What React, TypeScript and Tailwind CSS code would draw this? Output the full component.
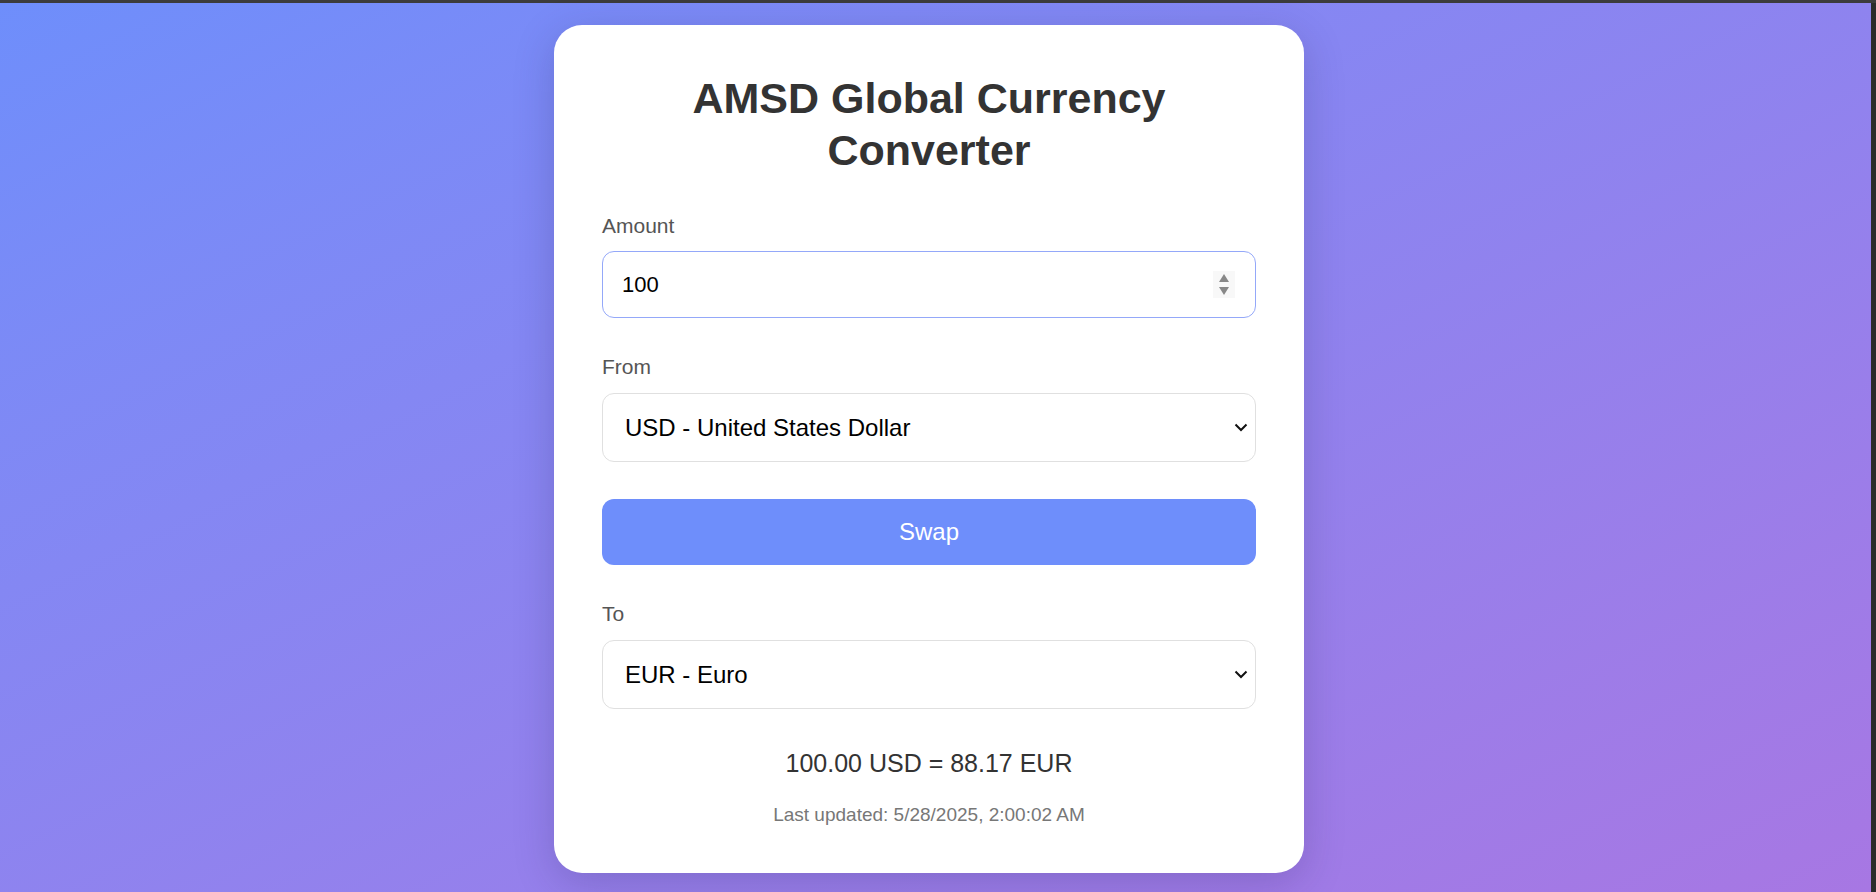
import { useState } from "react";

const currencies = [
  { code: "USD", name: "United States Dollar" },
  { code: "EUR", name: "Euro" },
  { code: "GBP", name: "British Pound" },
  { code: "JPY", name: "Japanese Yen" },
];

function Chevron() {
  return (
    <svg width="14" height="9" viewBox="0 0 14 9" className="shrink-0">
      <path d="M1.5 1.5 L7 7 L12.5 1.5" fill="none" stroke="#111" strokeWidth="2" />
    </svg>
  );
}

function CurrencySelect({ value, onChange }: { value: string; onChange: (v: string) => void }) {
  return (
    <div className="flex items-center h-[69px] rounded-xl border border-[#e0e0e0] bg-white pl-[22px] pr-[7px]">
      <select
        value={value}
        onChange={(e) => onChange(e.target.value)}
        className="flex-1 appearance-none bg-transparent outline-none text-[24px] leading-[normal] text-black"
      >
        {currencies.map((c) => (
          <option key={c.code} value={c.code}>
            {c.code} - {c.name}
          </option>
        ))}
      </select>
      <Chevron />
    </div>
  );
}

export default function App() {
  const [amount, setAmount] = useState("100");
  const [from, setFrom] = useState("USD");
  const [to, setTo] = useState("EUR");

  return (
    <div className="h-screen flex flex-col bg-[#2b2b2b] font-['Liberation_Sans',Arial,sans-serif] leading-[normal]">
      <div className="h-[3px] bg-[#3c3c3c]" />
      <div className="flex flex-1 min-h-0">
        <main className="flex-1 flex justify-center items-start pt-[22px] pr-[13px] bg-linear-to-br from-[#6e8efb] to-[#a777e3]">
          <div className="w-[750px] bg-white rounded-[28px] px-12 pt-12 pb-[47px] shadow-[0_10px_40px_rgba(40,30,90,0.22)]">
            <h1 className="text-[43px] leading-[1.2] font-bold text-[#333] text-center mb-[38px]">
              AMSD Global Currency Converter
            </h1>

            <div className="mb-[37px]">
              <label className="block text-[21px] leading-[normal] text-[#555] mb-[13px]">Amount</label>
              <div className="flex items-center h-[67px] rounded-xl border border-[#94a8f9] bg-white pl-[19px] pr-[20px]">
                <input
                  value={amount}
                  onChange={(e) => setAmount(e.target.value)}
                  className="flex-1 outline-none text-[22px] leading-[normal] text-black bg-transparent"
                />
                <div className="flex flex-col items-center justify-between w-[22px] h-[27px] py-[3px] bg-[#f8f8f8]">
                  <svg width="10" height="8" viewBox="0 0 10 8">
                    <path d="M5 0 L10 8 L0 8 Z" fill="#888" />
                  </svg>
                  <svg width="10" height="8" viewBox="0 0 10 8">
                    <path d="M0 0 L10 0 L5 8 Z" fill="#888" />
                  </svg>
                </div>
              </div>
            </div>

            <div className="mb-[37px]">
              <label className="block text-[21px] leading-[normal] text-[#555] mb-[14px]">From</label>
              <CurrencySelect value={from} onChange={setFrom} />
            </div>

            <button
              onClick={() => {
                setFrom(to);
                setTo(from);
              }}
              className="block w-full h-[66px] rounded-xl bg-[#6e8efb] text-white text-[24px] leading-[normal] mb-[37px]"
            >
              Swap
            </button>

            <div className="mb-[40px]">
              <label className="block text-[21px] leading-[normal] text-[#555] mb-[14px]">To</label>
              <CurrencySelect value={to} onChange={setTo} />
            </div>

            <p className="text-center text-[25px] leading-[normal] text-[#333] mb-[26px]">100.00 USD = 88.17 EUR</p>
            <p className="text-center text-[19px] leading-[normal] text-[#777]">Last updated: 5/28/2025, 2:00:02 AM</p>
          </div>
        </main>
        <div className="w-[5px] bg-[#2b2b2b]" />
      </div>
    </div>
  );
}
